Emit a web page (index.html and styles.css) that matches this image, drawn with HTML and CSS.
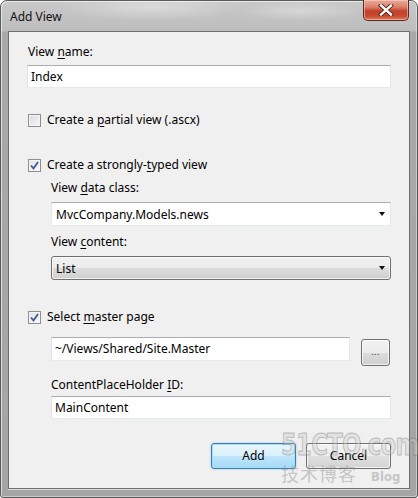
FILE: index.html
```html
<!DOCTYPE html>
<html>
<head>
<meta charset="utf-8">
<link rel="stylesheet" href="styles.css">
</head>
<body>
<div class="window">
  <div class="titlebar">
    <span class="title">Add View</span>
    <div class="close">
      <svg width="18" height="12" viewBox="0 0 18 12"><path d="M4 1.5 L14 10.5 M14 1.5 L4 10.5" stroke="#5a1e14" stroke-width="4.2" stroke-linecap="square"/><path d="M4 1.5 L14 10.5 M14 1.5 L4 10.5" stroke="#ffffff" stroke-width="2.4" stroke-linecap="square"/></svg>
    </div>
  </div>
  <div class="client">
    <div class="lbl l-name">View <u>n</u>ame:</div>
    <div class="textbox tb-name">Index</div>

    <div class="check c-partial"><span class="box"></span><span>Create a <u>p</u>artial view (.ascx)</span></div>
    <div class="check c-typed"><span class="box checked"><svg width="9" height="9" viewBox="0 0 9 9"><path d="M1 4.5 L3.5 7.5 L8 1" fill="none" stroke="#3d5a9c" stroke-width="1.8"/></svg></span><span>Create a strongly-<u>t</u>yped view</span></div>

    <div class="indent">
      <div class="lbl l-data">View <u>d</u>ata class:</div>
      <div class="combo white"><span>MvcCompany.Models.news</span><span class="arrow"></span></div>
      <div class="lbl l-content">View <u>c</u>ontent:</div>
      <div class="combo gray"><span>List</span><span class="arrow"></span></div>
    </div>

    <div class="check c-master"><span class="box checked"><svg width="9" height="9" viewBox="0 0 9 9"><path d="M1 4.5 L3.5 7.5 L8 1" fill="none" stroke="#3d5a9c" stroke-width="1.8"/></svg></span><span>Select <u>m</u>aster page</span></div>

    <div class="indent">
      <div class="master-row">
        <div class="textbox tb-master">~/Views/Shared/Site.Master</div>
        <div class="browse">...</div>
      </div>
      <div class="lbl l-cph">ContentPlaceHolder <u>I</u>D:</div>
      <div class="textbox tb-cph">MainContent</div>
    </div>

    <div class="buttons">
      <div class="btn default">Add</div>
      <div class="btn">Cancel</div>
    </div>
  </div>
  <div class="watermark">
    <div class="wm-top">51CTO.com</div>
    <div class="wm-bottom"><span class="wm-cn">技术博客</span><span class="wm-blog">Blog</span></div>
  </div>
</div>
</body>
</html>
```

FILE: styles.css
```css
* { box-sizing: border-box; }
html, body { margin: 0; padding: 0; background: #ffffff; }
body { width: 418px; height: 498px; overflow: hidden; }

.window {
  position: relative;
  width: 418px;
  height: 498px;
  border: 1px solid #5b5b5b;
  border-radius: 7px 7px 3px 3px;
  background:
    radial-gradient(ellipse 90px 14px at 150px 6px, rgba(255,255,255,0.35), rgba(255,255,255,0)),
    radial-gradient(ellipse 60px 10px at 300px 10px, rgba(255,255,255,0.3), rgba(255,255,255,0)),
    linear-gradient(to bottom, #c9c9c9 0px, #bdbdbd 30px, #a9a9a9 31px, #a5a5a5 100%);
  box-shadow: inset 1px 1px 0 rgba(255,255,255,0.6), inset -1px -1px 0 rgba(255,255,255,0.4);
  display: flex;
  flex-direction: column;
  font-family: "Noto Sans", "Open Sans", sans-serif;
  font-size: 12px;
  color: #000;
}

.titlebar {
  height: 30px;
  flex: none;
  display: flex;
  align-items: flex-start;
  position: relative;
}
.title {
  margin: 7px 0 0 9px;
  font-size: 12px;
  line-height: 17px;
  color: #111;
}
.close {
  margin-left: auto;
  margin-right: 8px;
  margin-top: -1px;
  width: 46px;
  height: 21px;
  border: 1px solid #5a2a22;
  border-top: none;
  border-radius: 0 0 5px 5px;
  background: linear-gradient(to bottom, #e9a99a 0%, #d9826d 35%, #c2412b 55%, #c84a32 80%, #e07a5e 100%);
  box-shadow: inset 0 0 0 1px rgba(255,220,210,0.5);
  display: flex;
  align-items: center;
  justify-content: center;
}

.client {
  flex: none;
  margin: 0 7px 0 7px;
  height: 458px;
  border: 1px solid #6f6f6f;
  background: #f0f0f0;
  padding: 0 18px 0 18px;
  display: flex;
  flex-direction: column;
  box-shadow: 0 1px 0 rgba(255,255,255,0.6);
}

.lbl { height: 16px; line-height: 16px; white-space: nowrap; }
.lbl u, .check u { text-decoration-thickness: 1px; text-underline-offset: 2px; }
.l-name { margin-top: 12px; padding-left: 1px; }

.textbox {
  background: #fff;
  border: 1px solid #e3e9ef;
  border-top-color: #abadb3;
  border-left-color: #e2e3ea;
  height: 23px;
  line-height: 21px;
  padding-left: 3px;
  white-space: nowrap;
}
.tb-name { margin-top: 5px; }

.check {
  display: flex;
  align-items: center;
  height: 16px;
  line-height: 16px;
  white-space: nowrap;
}
.check .box {
  width: 13px;
  height: 13px;
  border: 1px solid #8e8f8f;
  background: linear-gradient(135deg, #dcdcdc, #f6f6f6);
  box-shadow: inset 0 0 0 1px #f4f4f4;
  margin: 0 6px 0 1px;
  display: flex;
  align-items: center;
  justify-content: center;
}
.check .box.checked { background: linear-gradient(135deg, #e2e2e2, #fafafa); }
.c-partial { margin-top: 24px; }
.c-typed { margin-top: 29px; }
.c-master { margin-top: 29px; }

.indent { display: flex; flex-direction: column; padding-left: 24px; }
.l-data { margin-top: 7px; }
.l-content { margin-top: 8px; }
.l-cph { margin-top: 11px; }

.combo {
  height: 24px;
  margin-top: 6px;
  display: flex;
  align-items: center;
  padding: 0 5px 0 4px;
  white-space: nowrap;
}
.combo .arrow {
  margin-left: auto;
  width: 0;
  height: 0;
  border-left: 3.5px solid transparent;
  border-right: 3.5px solid transparent;
  border-top: 4px solid #111;
}
.combo.white {
  background: #fff;
  border: 1px solid #e3e9ef;
  border-top-color: #abadb3;
}
.combo.gray {
  border: 1px solid #707070;
  border-radius: 3px;
  background: linear-gradient(to bottom, #f2f2f2 0%, #ebebeb 50%, #dddddd 51%, #cfcfcf 100%);
  box-shadow: inset 0 0 0 1px rgba(255,255,255,0.7);
}

.master-row {
  margin-top: 12px;
  display: flex;
  align-items: flex-start;
  height: 29px;
}
.tb-master { width: 299px; height: 24px; line-height: 22px; }
.browse {
  margin-left: 11px;
  margin-top: 2px;
  width: 29px;
  height: 27px;
  border: 1px solid #707070;
  border-radius: 3px;
  background: linear-gradient(to bottom, #f2f2f2 0%, #ebebeb 50%, #dddddd 51%, #cfcfcf 100%);
  box-shadow: inset 0 0 0 1px rgba(255,255,255,0.7);
  text-align: center;
  font-size: 9px;
  line-height: 24px;
  color: #333;
  letter-spacing: 0.5px;
}
.tb-cph { margin-top: 3px; }

.buttons {
  margin-top: 24px;
  display: flex;
  justify-content: flex-end;
  gap: 10px;
}
.btn {
  width: 85px;
  height: 26px;
  border: 1px solid #707070;
  border-radius: 3px;
  background: linear-gradient(to bottom, #f4f4f4 0%, #ececec 50%, #dfdfdf 51%, #d4d4d4 100%);
  box-shadow: inset 0 0 0 1px rgba(255,255,255,0.7);
  text-align: center;
  line-height: 24px;
}
.btn.default {
  border-color: #3c7fb1;
  background: linear-gradient(to bottom, #eaf6fd 0%, #d9f0fc 50%, #bee6fd 51%, #a7d9f5 100%);
  box-shadow: inset 0 0 0 1px #9fe0f6, 0 0 2px rgba(60,127,177,0.5);
}

.watermark {
  position: absolute;
  left: 280px;
  top: 426px;
  width: 130px;
  pointer-events: none;
  color: rgba(120,120,120,0.45);
  font-family: "DejaVu Sans Condensed", "DejaVu Sans", sans-serif;
}
.wm-top {
  font-size: 31px;
  font-weight: bold;
  line-height: 34px;
  letter-spacing: -1px;
  transform: scaleX(0.82);
  transform-origin: left center;
  -webkit-text-stroke: 1px rgba(90,90,90,0.35);
  color: rgba(200,200,200,0.35);
}
.wm-bottom {
  display: flex;
  align-items: baseline;
  margin-top: 1px;
}
.wm-cn {
  font-family: "Noto Sans CJK SC", sans-serif;
  font-size: 18px;
  line-height: 22px;
  letter-spacing: 1px;
  color: rgba(130,130,130,0.4);
}
.wm-blog {
  margin-left: 14px;
  font-size: 13px;
  font-weight: bold;
  color: rgba(130,130,130,0.4);
}
```
